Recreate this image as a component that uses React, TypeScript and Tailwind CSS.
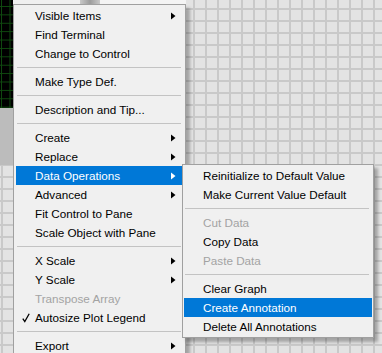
import React from "react"

type Item =
    | { kind: "sep" }
    | { kind: "item"; label: string; sub?: boolean; active?: boolean; disabled?: boolean; checked?: boolean }

const mainItems: Item[] = [
    { kind: "item", label: "Visible Items", sub: true },
    { kind: "item", label: "Find Terminal" },
    { kind: "item", label: "Change to Control" },
    { kind: "sep" },
    { kind: "item", label: "Make Type Def." },
    { kind: "sep" },
    { kind: "item", label: "Description and Tip..." },
    { kind: "sep" },
    { kind: "item", label: "Create", sub: true },
    { kind: "item", label: "Replace", sub: true },
    { kind: "item", label: "Data Operations", sub: true, active: true },
    { kind: "item", label: "Advanced", sub: true },
    { kind: "item", label: "Fit Control to Pane" },
    { kind: "item", label: "Scale Object with Pane" },
    { kind: "sep" },
    { kind: "item", label: "X Scale", sub: true },
    { kind: "item", label: "Y Scale", sub: true },
    { kind: "item", label: "Transpose Array", disabled: true },
    { kind: "item", label: "Autosize Plot Legend", checked: true },
    { kind: "sep" },
    { kind: "item", label: "Export", sub: true },
]

const subItems: Item[] = [
    { kind: "item", label: "Reinitialize to Default Value" },
    { kind: "item", label: "Make Current Value Default" },
    { kind: "sep" },
    { kind: "item", label: "Cut Data", disabled: true },
    { kind: "item", label: "Copy Data" },
    { kind: "item", label: "Paste Data", disabled: true },
    { kind: "sep" },
    { kind: "item", label: "Clear Graph" },
    { kind: "item", label: "Create Annotation", active: true },
    { kind: "item", label: "Delete All Annotations" },
]

function Arrow({ white }: { white?: boolean }) {
    return (
        <svg width="5" height="8" viewBox="0 0 5 8" className="ml-auto shrink-0">
            <polygon points="0,0.5 4.5,4 0,7.5" fill={white ? "#ffffff" : "#000000"} />
        </svg>
    )
}

function Check() {
    return (
        <svg width="8" height="10" viewBox="0 0 8 10">
            <path d="M0.8 5.6 L2.8 8.6 L7.2 0.8" fill="none" stroke="#000" strokeWidth="1.3" />
        </svg>
    )
}

function MenuList({ items, sepClass }: { items: Item[]; sepClass: string }) {
    return (
        <>
            {items.map((it, i) =>
                it.kind === "sep" ? (
                    <div key={i} className="h-[9px] flex items-center">
                        <div className={`h-px bg-[#c3c3c3] ${sepClass}`} />
                    </div>
                ) : (
                    <div
                        key={i}
                        className={`h-[19px] flex items-center pr-[7px] whitespace-nowrap ${
                            it.active ? "bg-[#0078d7] text-white" : it.disabled ? "text-[#a3a3a3]" : "text-black"
                        }`}
                    >
                        <div className="w-[19px] shrink-0 flex justify-center">{it.checked && <Check />}</div>
                        <span>{it.label}</span>
                        {it.sub && <Arrow white={it.active} />}
                    </div>
                )
            )}
        </>
    )
}

export default function App() {
    return (
        <div
            className="relative w-[382px] h-[353px] overflow-hidden bg-[#e3e3e3] bg-[linear-gradient(to_right,#c9c9c9_2px,transparent_2px),linear-gradient(to_bottom,#c9c9c9_2px,transparent_2px)] [background-size:12px_12px] [background-position:1px_8px] text-[11.7px] leading-none"
            style={{ fontFamily: '"Liberation Sans", Arial, sans-serif' }}
        >
            {/* left strip: graph plot + frame */}
            <div className="flex h-full">
                <div className="w-[13px] flex flex-col">
                    <div className="h-[108px] bg-black bg-[linear-gradient(to_right,#0f4a0f_1px,transparent_1px),linear-gradient(to_bottom,#0f4a0f_1px,transparent_1px)] [background-size:8.5px_8.4px] [background-position:1px_6px]" />
                    <div className="h-[57px] bg-[#bcbcbc]" />
                </div>
                <div className="flex flex-col w-[173px]">
                    <div className="h-[4px] flex">
                        <div className="w-[67px] bg-[#f0f0f0]" />
                        <div className="w-[20px] bg-[linear-gradient(to_right,#c8c8c8,#9c9c9c,#c8c8c8)]" />
                        <div className="flex-1 bg-[#f4f4f4]" />
                    </div>
                </div>
            </div>

            {/* main context menu */}
            <div className="absolute left-[13px] top-[4px] w-[173px] bg-[#f0f0f0] border border-[#a0a0a0] px-[2px] pt-[1px] shadow-[4px_4px_3px_rgba(0,0,0,0.28)]">
                <MenuList items={mainItems} sepClass="ml-[1px] w-[164px]" />
            </div>

            {/* Data Operations submenu */}
            <div className="absolute left-[182px] top-[164px] w-[192px] bg-[#f0f0f0] border border-[#a0a0a0] p-px shadow-[4px_4px_3px_rgba(0,0,0,0.28)]">
                <MenuList items={subItems} sepClass="ml-[1px] w-[184px]" />
            </div>
        </div>
    )
}
